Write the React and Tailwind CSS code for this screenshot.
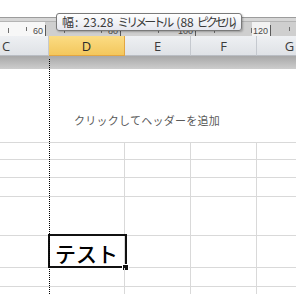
export default function App() {
  const jp = { fontFamily: '"Noto Sans CJK JP", "Noto Sans", sans-serif' };
  const minor = [];
  for (let i = 0; i < 17; i++) {
    const x = 7.5 + i * 18.75;
    if (Math.abs((x - 45) % 75) < 0.01) continue;
    minor.push(x);
  }
  const rows = [17, 18, 19, 39, 32, 19, 30];
  return (
    <div className="relative w-[296px] h-[294px] overflow-hidden bg-white" style={jp}>
      {/* top blank strip */}
      <div className="h-[17px] bg-white" />
      {/* ruler top border */}
      <div className="h-[5px] border-t border-[#9c9c9c] border-b border-b-[#b4b4b4] bg-[#d6d6d6]" />
      {/* ruler */}
      <div className="h-[14px] bg-[#cfcfcf] flex">
        <div className="w-[45px] bg-[#f7f7f7]" />
        <div className="flex-1 relative">
          <div className="absolute left-[207px] top-0 w-[18px] h-[14px] bg-[#f2f2f2]" />
        </div>
        <svg className="absolute left-0 top-[22px]" width="296" height="14" viewBox="0 0 296 14">
          {minor.map((x, i) => (
            <line key={i} x1={Math.round(x) + 0.5} x2={Math.round(x) + 0.5} y1={i % 2 === 0 ? 6 : 5} y2={i % 2 === 0 ? 11 : 9} stroke="#6e6e6e" strokeWidth="1" />
          ))}
          {[45, 120, 195, 270].map((x) => (
            <line key={x} x1={x + 0.5} x2={x + 0.5} y1="3" y2="14" stroke="#5a5a5a" strokeWidth="1" />
          ))}
          {[[43, '60'], [118, '80'], [193, '100'], [268, '120']].map(([x, t]) => (
            <text key={t} x={x} y="12" textAnchor="end" fontSize="9" fill="#4a4a4a" fontFamily='"Liberation Sans", sans-serif'>{t}</text>
          ))}
        </svg>
      </div>
      {/* column headers */}
      <div className="flex h-[20px] text-[13px] leading-[20px] text-[#3b3b3b]" style={{ fontFamily: '"Open Sans", "Noto Sans", sans-serif' }}>
        <div className="w-[49px] shrink-0 bg-gradient-to-b from-[#eef0f3] to-[#dfe2e6] border-r border-[#c5c9cf] border-b border-b-[#b9bdc3] pl-[2px]">C</div>
        <div className="w-[76px] shrink-0 bg-gradient-to-b from-[#fbdc83] to-[#f3c75c] border-r border-b border-[#e2a642] text-center text-[#2a2a2a]">D</div>
        <div className="w-[66px] shrink-0 bg-gradient-to-b from-[#eef0f3] to-[#dfe2e6] border-r border-[#c5c9cf] border-b border-b-[#b9bdc3] text-center">E</div>
        <div className="w-[66px] shrink-0 bg-gradient-to-b from-[#eef0f3] to-[#dfe2e6] border-r border-[#c5c9cf] border-b border-b-[#b9bdc3] text-center">F</div>
        <div className="w-[66px] shrink-0 bg-gradient-to-b from-[#eef0f3] to-[#dfe2e6] border-r border-[#c5c9cf] border-b border-b-[#b9bdc3] text-center">G</div>
      </div>
      {/* shadow band */}
      <div className="h-[13px] bg-gradient-to-b from-[#a8a8a8] to-[#cdcdcd]" />
      {/* page header area */}
      <div className="h-[73px] pt-[44px] pl-[74px] text-[11px] leading-[14px] tracking-[0.25px] text-[#5a5a5a]">
        クリックしてヘッダーを追加
      </div>
      {/* grid */}
      <div className="border-t border-[#d9d9d9]">
        {rows.map((h, r) => (
          <div key={r} className="flex border-b border-[#d9d9d9]" style={{ height: h }}>
            <div className="w-[49px] shrink-0" />
            <div className="w-[76px] shrink-0 border-r border-[#d9d9d9] relative">
              {r === 4 && (
                <>
                  <div className="absolute left-[6px] top-0 h-full flex items-center text-[21px] leading-[24px] font-medium text-black pt-[3px] whitespace-nowrap">テスト</div>
                  <div className="absolute -left-[1px] -top-[2px] w-[79px] h-[34px] border-2 border-[#111]" />
                  <div className="absolute left-[73px] top-[28px] w-[7px] h-[7px] bg-white flex items-center justify-center">
                    <div className="w-[5px] h-[5px] bg-[#111]" />
                  </div>
                </>
              )}
            </div>
            <div className="w-[66px] shrink-0 border-r border-[#d9d9d9]" />
            <div className="w-[66px] shrink-0 border-r border-[#d9d9d9]" />
            <div className="w-[66px] shrink-0 border-r border-[#d9d9d9]" />
          </div>
        ))}
      </div>
      {/* dotted drag line */}
      <div className="absolute left-[49px] top-[59px] bottom-0 border-l border-dotted border-black" />
      {/* tooltip */}
      <div className="absolute left-[56px] top-[13px] w-[186px] h-[18px] rounded-[3px] border border-[#7a7a7a] bg-gradient-to-b from-white to-[#e6e7ef] shadow-[1px_1px_2px_rgba(0,0,0,0.25)] pl-[5px] text-[12px] leading-[16px] text-[#3a3a3a] whitespace-nowrap">
        <span>幅</span>
        <span className="ml-[1px]">:</span>
        <span className="ml-[5px]">23.28</span>
        <span className="ml-[4px] tracking-[-3px]">ミリメートル</span>
        <span className="ml-[5px]">(88</span>
        <span className="ml-[3px] tracking-[-3px]">ピクセル</span>
        <span>)</span>
      </div>
    </div>
  );
}
